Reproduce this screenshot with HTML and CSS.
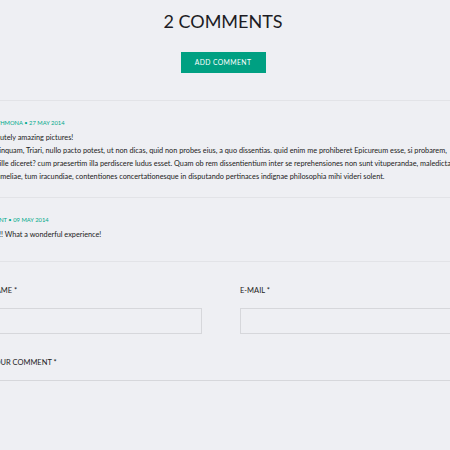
FILE: index.html
```html
<!DOCTYPE html>
<html>
    <head>
    <meta charset="utf-8">
    <meta name="viewport" content="width=device-width, initial-scale=1.0">
    <title>comments</title>
    <link rel="stylesheet" href="styles.css">
    </head>

    <body>
    <section class="comments">
        <div class="comments-head">
            <h2>2 Comments</h2>
            <a class="btn" href="#reply">Add comment</a>
        </div>
        <div class="comment-list">
            <div class="comment">
                <p class="meta">Rosethmona &bull; 27 May 2014</p>
                <p>Absolutely amazing pictures!<br>
                Tum, inquam, Triari, nullo pacto potest, ut non dicas, quid non probes eius, a quo dissentias. quid enim me prohiberet Epicureum esse, si probarem, quae ille diceret? cum praesertim illa perdiscere ludus esset. Quam ob rem dissentientium inter se reprehensiones non sunt vituperandae, maledicta, contumeliae, tum iracundiae, contentiones concertationesque in disputando pertinaces indignae philosophia mihi videri solent.</p>
            </div>
            <div class="comment">
                <p class="meta">Vincent &bull; 09 May 2014</p>
                <p>Wow!! What a wonderful experience!</p>
            </div>
        </div>
        <form class="reply" id="reply">
            <div class="row">
                <label class="field">
                    <span>Name *</span>
                    <input type="text">
                </label>
                <label class="field">
                    <span>E-mail *</span>
                    <input type="text">
                </label>
            </div>
            <label class="field">
                <span>Your comment *</span>
                <textarea rows="6"></textarea>
            </label>
        </form>
    </section>
    </body>
</html>
```

FILE: styles.css
```css
body {
    padding: 0;
    margin: 0;
    background-color: #eeeff3;
    color: #222;
    font-family: "Lato", "Liberation Sans", sans-serif;
    overflow: hidden;
}
.comments{
    width: 482px;
    margin-left: -18px;
}
.comments-head{
    text-align: center;
    padding-top: 9px;
    padding-bottom: 27px;
    border-bottom: 1px solid #e2e3e7;
}
.comments-head h2{
    margin: 0;
    font-size: 18px;
    line-height: 24px;
    font-weight: 400;
    text-transform: uppercase;
    color: #1c1c24;
}
.btn{
    display: inline-block;
    margin-top: 19px;
    width: 85px;
    height: 21px;
    line-height: 21px;
    background-color: #00a082;
    color: white;
    font-size: 6.8px;
    letter-spacing: 0.4px;
    text-transform: uppercase;
    text-decoration: none;
}
.comment{
    padding: 17px 0 14px;
    border-bottom: 1px solid #e2e3e7;
    font-size: 7.3px;
    line-height: 13px;
}
.comment:last-child{
    padding-bottom: 20px;
}
.comment p{
    margin: 0;
}
.comment .meta{
    margin-bottom: 3px;
    color: #00a98a;
    font-size: 5.8px;
    line-height: 10px;
    text-transform: uppercase;
}
.reply{
    width: 462px;
    margin-left: 8px;
    padding-top: 24px;
}
.row{
    display: grid;
    grid-template-columns: 1fr 1fr;
    gap: 38px;
}
.field{
    display: flex;
    flex-direction: column;
    gap: 12px;
    margin-bottom: 24px;
}
.field span{
    font-size: 7.5px;
    text-transform: uppercase;
    line-height: 10px;
}
.field input,
.field textarea{
    box-sizing: border-box;
    width: 100%;
    height: 26px;
    border: 1px solid #d6d7db;
    background: transparent;
    font: inherit;
}
.field textarea{
    height: 120px;
    resize: none;
}
```
